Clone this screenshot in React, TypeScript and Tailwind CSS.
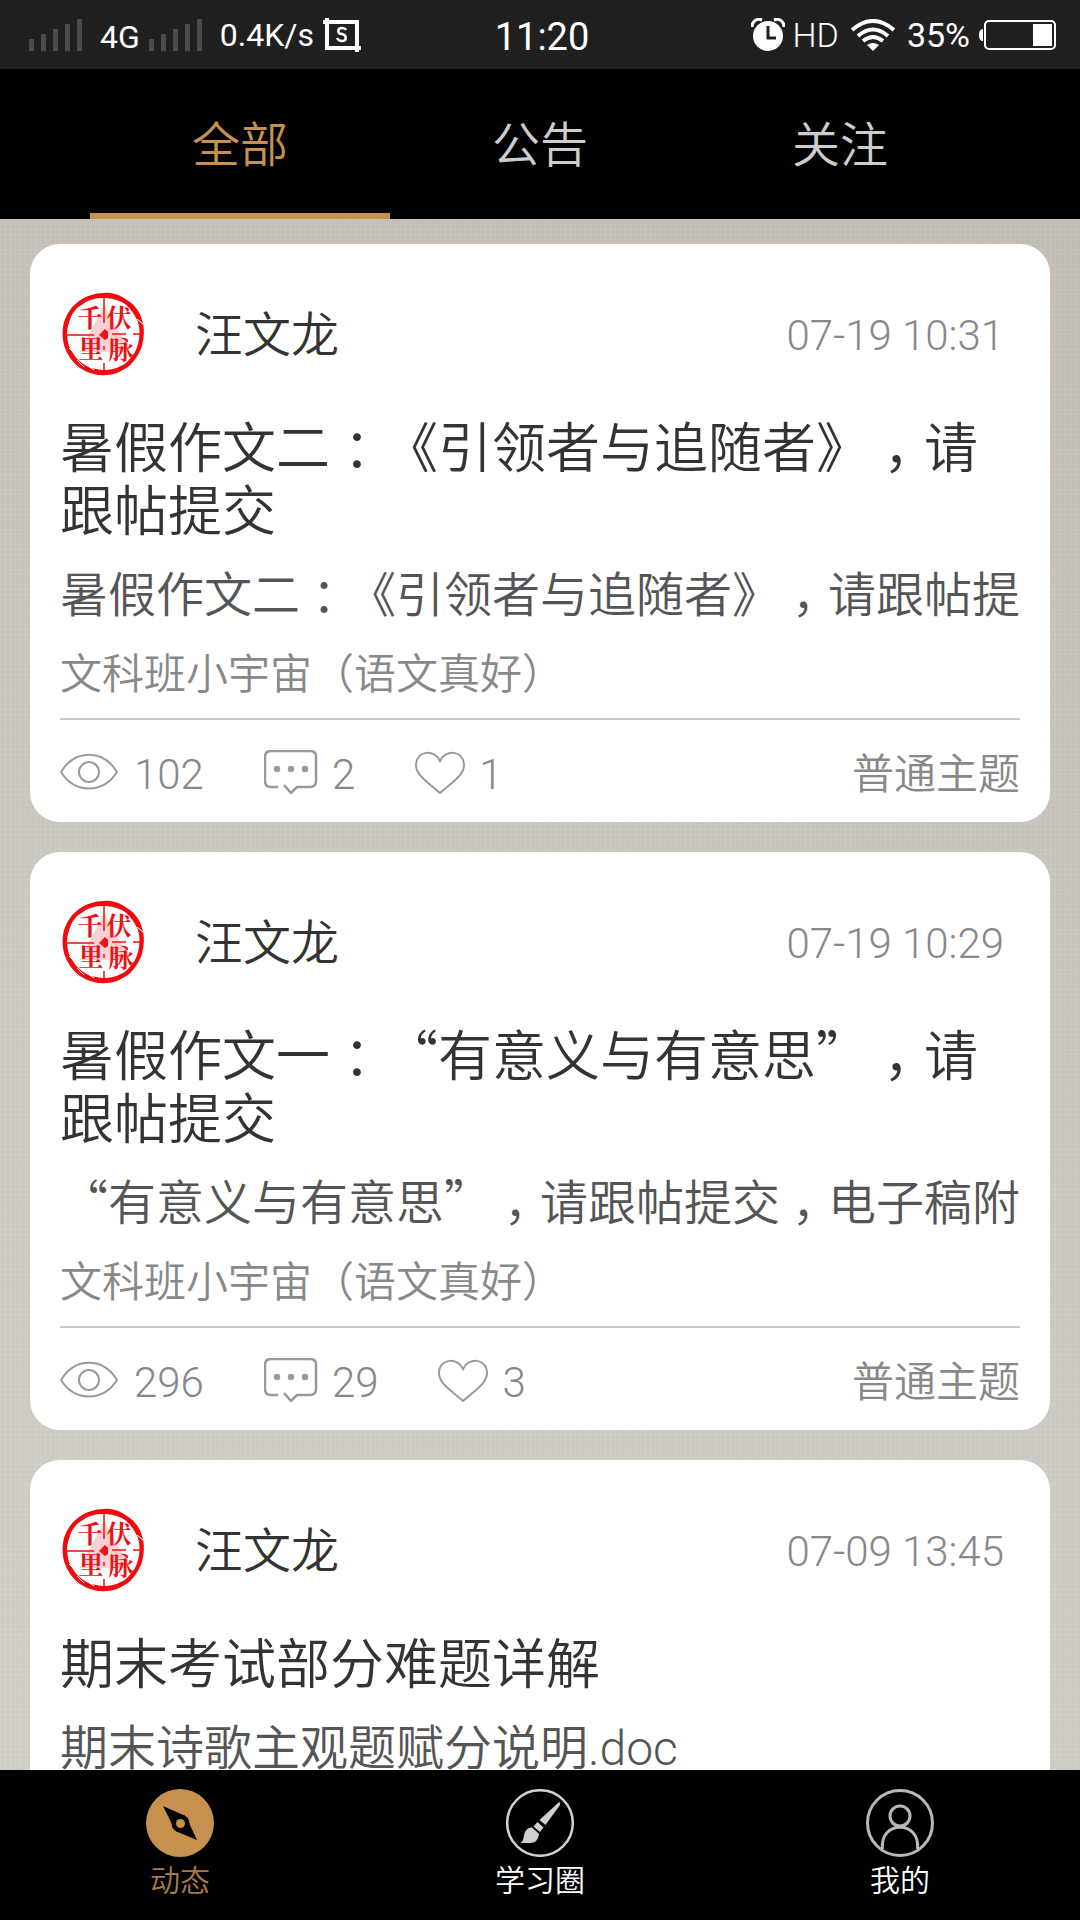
import React, { useState } from 'react';

interface Post {
  id: number;
  author: string;
  date: string;
  title: string;
  summary: string;
  group: string;
  views: number;
  comments: number;
  likes: number;
  kind: string;
}

const posts: Post[] = [
  {
    id: 1,
    author: '汪文龙',
    date: '07-19 10:31',
    title: '暑假作文二：《引领者与追随者》，请跟帖提交',
    summary: '暑假作文二：《引领者与追随者》，请跟帖提',
    group: '文科班小宇宙（语文真好）',
    views: 102,
    comments: 2,
    likes: 1,
    kind: '普通主题',
  },
  {
    id: 2,
    author: '汪文龙',
    date: '07-19 10:29',
    title: '暑假作文一：“有意义与有意思”，请跟帖提交',
    summary: '“有意义与有意思”，请跟帖提交，电子稿附',
    group: '文科班小宇宙（语文真好）',
    views: 296,
    comments: 29,
    likes: 3,
    kind: '普通主题',
  },
  {
    id: 3,
    author: '汪文龙',
    date: '07-09 13:45',
    title: '期末考试部分难题详解',
    summary: '期末诗歌主观题赋分说明.doc',
    group: '文科班小宇宙（语文真好）',
    views: 215,
    comments: 6,
    likes: 2,
    kind: '普通主题',
  },
];

// Full-width punctuation: commas and colons sit in the middle of their cell
const CjkText: React.FC<{ text: string }> = ({ text }) => (
  <>
    {text.split(/([：，“”])/).map((part, i) => {
      if (part === '：' || part === '，') {
        return (
          <span key={i} className="inline-block w-[1em] text-center leading-none [font-feature-settings:'halt']">
            {part}
          </span>
        );
      }
      if (part === '“' || part === '”') {
        return <span key={i} className="leading-none font-['Noto_Sans_CJK_SC',sans-serif]">{part}</span>;
      }
      return part;
    })}
  </>
);

const Signal = () => (
  <svg className="w-14 h-9" viewBox="0 0 56 36" fill="#4b4b4b" aria-hidden="true">
    <rect x="1" y="22" width="5" height="12" />
    <rect x="13" y="17" width="5" height="17" />
    <rect x="25" y="12" width="5" height="22" />
    <rect x="37" y="7" width="5" height="27" />
    <rect x="49" y="2" width="5" height="32" />
  </svg>
);

const StatusBar = () => (
  <div className="grid grid-cols-[1fr_auto_1fr] items-center h-[69px] shrink-0 pl-7 pr-6 bg-[#202020] text-white text-[34px] leading-10 font-normal">
    <div className="flex items-center text-[32px]">
      <Signal />
      <span className="ml-4 pt-1">4G</span>
      <span className="ml-2"><Signal /></span>
      <span className="ml-4">0.4K/s</span>
      <svg className="ml-2 w-10 h-9" viewBox="0 0 40 36" fill="none" stroke="#fff" strokeWidth="4" aria-hidden="true">
        <path d="M1 5H35V35M5 1V31H39" />
        <path d="M24 13c-1-2-2-2-4-2-5 0-5 6 0 6 5 1 5 7 0 7-3 0-4-1-5-3" strokeWidth="2.5" />
      </svg>
    </div>
    <span className="pt-1 text-[38px]">11:20</span>
    <div className="flex items-center justify-end">
      <svg className="w-[34px] h-[34px]" viewBox="0 0 34 34" aria-hidden="true">
        <circle cx="17" cy="18" r="15" fill="#fff" />
        <path d="M1 9C1 3 6 0 11 2M33 9C33 3 28 0 23 2" stroke="#fff" strokeWidth="3" fill="none" />
        <path d="M17 8V20H25" stroke="#202020" strokeWidth="3" fill="none" />
      </svg>
      <span className="ml-2 font-light">HD</span>
      <svg className="ml-3 w-11 h-8" viewBox="0 0 44 32" fill="none" stroke="#fff" strokeWidth="4" aria-hidden="true">
        <path d="M1 11Q22-7 43 11M7 17Q22 4 37 17M12 22Q22 14 32 22" />
        <path d="M22 32l-6-6q6-4 12 0z" fill="#fff" stroke="none" />
      </svg>
      <span className="ml-3">35%</span>
      <svg className="ml-2 w-[78px] h-8" viewBox="0 0 78 32" aria-hidden="true">
        <path d="M5 10Q1 10 1 16T5 22z" fill="#fff" />
        <rect x="7" y="2" width="70" height="28" rx="4" fill="none" stroke="#fff" strokeWidth="2" />
        <rect x="55" y="5" width="19" height="22" fill="#fff" />
      </svg>
    </div>
  </div>
);

const Avatar = () => (
  <svg className="w-[88px] h-[88px]" viewBox="0 0 88 88" role="img" aria-label="千里伏脉">
    <path d="M44 15L70 62H20z" fill="#fbd0d2" />
    <path
      d="M44 3C52 2 60 5 67 10C75 15 80 22 82 30C85 38 84 48 82 56C79 64 75 71 68 77C60 82 54 85 46 85C37 86 28 83 20 78C13 73 8 66 5 58C2 50 2 40 4 32C7 23 12 16 19 11C26 6 35 3 44 3zM44 8C37 8 29 9 23 14C15 18 11 25 9 33C6 40 7 49 9 56C12 62 16 69 22 73C28 78 37 80 45 80C53 80 60 77 66 73C72 67 76 62 78 54C80 46 80 39 78 32C75 25 71 19 65 14C59 10 51 8 44 8z"
      fill="#f00a10"
      fillRule="evenodd"
    />
    <path d="M9 58L14 63M17 70L24 77M28 76L34 80M77 29L83 34" stroke="#fff" strokeWidth="1" />
    <path d="M44 6V33M44 56V60M44 73V82M6 45H34M52 44H66M73 44H82" stroke="#ee1016" strokeWidth="1.5" />
    <path d="M39 45l6-6 3 3v6l-3 2z" fill="#ee1016" />
    <g fill="#ee1016" fontFamily="'Noto Serif CJK SC','Noto Sans CJK SC',serif" fontWeight="700" fontSize="25" textAnchor="middle">
      <text x="30" y="37">千</text>
      <text x="59" y="37">伏</text>
      <text x="31" y="68">里</text>
      <text x="61" y="69">脉</text>
    </g>
  </svg>
);

const EyeIcon = () => (
  <svg className="w-[58px] h-11" viewBox="0 0 58 44" fill="none" stroke="#999" strokeWidth="2" aria-hidden="true">
    <path d="M1 22C15-1 43-1 57 22C43 44 15 44 1 22z" />
    <circle cx="29" cy="22" r="10" />
  </svg>
);

const CommentIcon = () => (
  <svg className="w-[54px] h-11" viewBox="0 0 54 44" fill="none" stroke="#999" strokeWidth="2.5" aria-hidden="true">
    <path d="M14 37H7Q1 37 1 31V7Q1 1 7 1H46Q52 1 52 7V31Q52 37 46 37H33L27 43L20 35" />
    <g fill="#999" stroke="none">
      <circle cx="13" cy="19" r="3.2" />
      <circle cx="27" cy="19" r="3.2" />
      <circle cx="41" cy="19" r="3.2" />
    </g>
  </svg>
);

const HeartIcon = () => (
  <svg className="w-[50px] h-11" viewBox="0 0 50 44" fill="none" stroke="#999" strokeWidth="2" aria-hidden="true">
    <path d="M25 11C20-1 1 0 1 15C1 25 12 32 25 43C38 32 49 25 49 15C49 0 30-1 25 11z" />
  </svg>
);

const PostCard: React.FC<{ post: Post }> = ({ post }) => (
  <article className="px-[30px] pt-[46px] bg-white rounded-[30px] shrink-0">
    <header className="flex items-center">
      <Avatar />
      <span className="ml-[47px] pt-1 text-[48px] leading-[56px] text-[#333]">{post.author}</span>
      <time className="ml-auto mr-4 pt-1 text-[42px] leading-[50px] text-[#888]">{post.date}</time>
    </header>
    <h2 className="mt-10 text-[54px] leading-[63px] text-[#333]">
      <CjkText text={post.title} />
    </h2>
    <p className="mt-[17px] text-[48px] leading-[70px] text-[#555] whitespace-nowrap overflow-x-clip">
      <CjkText text={post.summary} />
    </p>
    <p className="mt-[19px] text-[42px] leading-[50px] text-[#888]">{post.group}</p>
    <footer className="flex items-center gap-[60px] mt-[18px] pt-0.5 h-[104px] border-t-2 border-[#c8c8c8] text-[42px] leading-[50px] text-[#888]">
      <span className="flex items-center gap-4"><EyeIcon /><span className="pt-1.5">{post.views}</span></span>
      <button className="flex items-center gap-3.5"><CommentIcon /><span className="pt-1.5">{post.comments}</span></button>
      <button className="flex items-center gap-3.5"><HeartIcon /><span className="pt-1.5">{post.likes}</span></button>
      <span className="ml-auto pt-1.5">{post.kind}</span>
    </footer>
  </article>
);

const tabs = ['全部', '公告', '关注'];

const App: React.FC = () => {
  const [activeTab, setActiveTab] = useState('全部');

  return (
    <div className="flex flex-col h-screen font-[350] font-['Roboto','Noto_Sans_CJK_SC',sans-serif]">
      <StatusBar />

      {/* Tabs */}
      <nav className="flex h-[150px] shrink-0 px-[90px] bg-black text-[48px]">
        {tabs.map((tab) => (
          <button
            key={tab}
            onClick={() => setActiveTab(tab)}
            className={`flex-1 pt-2.5 border-b-[6px] ${
              activeTab === tab ? 'text-[#c6914f] border-[#c6914f]' : 'text-[#ccc] border-transparent'
            }`}
          >
            {tab}
          </button>
        ))}
      </nav>

      {/* Feed */}
      <main className="flex flex-col flex-1 min-h-0 gap-[30px] px-[30px] pt-[25px] overflow-y-auto [scrollbar-width:none] bg-[#c7c3bb] bg-[repeating-linear-gradient(0deg,#ffffff14_0_1px,transparent_1px_5px),repeating-linear-gradient(90deg,#ffffff14_0_1px,transparent_1px_5px),linear-gradient(200deg,#c1bcb4,#cbc8c1_60%,#d0cdc7)]">
        {posts.map((post) => (
          <PostCard key={post.id} post={post} />
        ))}
      </main>

      {/* Bottom navigation */}
      <nav className="grid grid-cols-3 h-[150px] shrink-0 bg-black text-[30px] leading-9 text-white">
        <a href="#feed" className="flex flex-col items-center gap-1.5 pt-[19px] text-[#a87c46]">
          <svg className="w-[68px] h-[68px]" viewBox="0 0 68 68" aria-hidden="true">
            <circle cx="34" cy="34" r="34" fill="#c6914f" />
            <path d="M17 17L36 25.5Q42 27 43 34L51 51L33 43.5Q27 42 26 35z" fill="#000" />
            <circle cx="34.5" cy="34.5" r="9" fill="#000" />
            <circle cx="34.5" cy="34.5" r="4.5" fill="#c6914f" />
          </svg>
          动态
        </a>
        <a href="#circle" className="flex flex-col items-center gap-1.5 pt-[19px]">
          <svg className="w-[68px] h-[68px]" viewBox="0 0 68 68" aria-hidden="true">
            <circle cx="34" cy="34" r="32.8" fill="none" stroke="#d0d0d0" strokeWidth="2.5" />
            <path d="M52 14Q55 12 54 16L39.5 36L33.5 31z" fill="#d0d0d0" />
            <path d="M31.5 33L37.5 38.5L34 43L27.5 37.5zM26 38.5L33 45Q32 54 24 54H14.5Q18 51 18 46Q20 38 26 38.5z" fill="#d0d0d0" />
          </svg>
          学习圈
        </a>
        <a href="#me" className="flex flex-col items-center gap-1.5 pt-[19px]">
          <svg className="w-[68px] h-[68px]" viewBox="0 0 68 68" fill="none" stroke="#b8b8b8" strokeWidth="3" aria-hidden="true">
            <circle cx="34" cy="34" r="32.5" />
            <circle cx="34" cy="27" r="10" />
            <path d="M16.5 60C13 31 55 31 51.5 60" />
          </svg>
          我的
        </a>
      </nav>
    </div>
  );
};

export default App;
